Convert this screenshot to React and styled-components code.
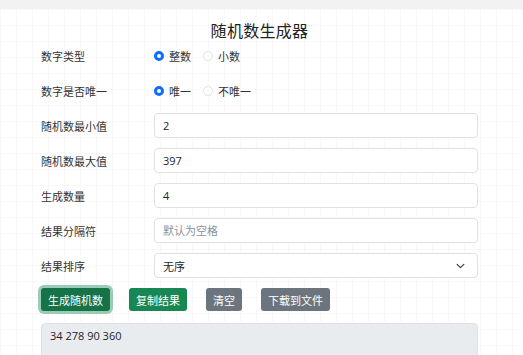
import React, { useState } from "react";
import styled, { createGlobalStyle } from "styled-components";

const GlobalStyle = createGlobalStyle`
  html, body {
    margin: 0;
    padding: 0;
    background: #fff;
  }
  body {
    font-family: "Open Sans", "Noto Sans CJK SC", sans-serif;
    color: #212529;
    overflow: hidden;
  }
`;

const Page = styled.div`
  height: 355px;
  overflow: hidden;
  border-top: 9px solid #f2f2f2;
  background-color: #fff;
  background-image:
    linear-gradient(rgba(0, 0, 0, 0.025) 1px, transparent 1px),
    linear-gradient(90deg, rgba(0, 0, 0, 0.025) 1px, transparent 1px);
  background-size: 16px 16px;
`;

const Container = styled.div`
  width: 437px;
  margin: 0 auto 0 41px;
`;

const Title = styled.h1`
  margin: 0;
  padding-top: 9px;
  height: 34px;
  box-sizing: border-box;
  text-align: center;
  font-size: 16px;
  font-weight: 400;
  color: #222;
  letter-spacing: 0.3px;
  font-family: "Noto Sans CJK SC", sans-serif;
`;

const Row = styled.div`
  display: grid;
  grid-template-columns: 113px 1fr;
  align-items: center;
  height: 25px;
  margin-bottom: 10px;
`;

const Label = styled.label`
  font-size: 11px;
  color: #333;
  font-family: "Noto Sans CJK SC", sans-serif;
`;

const Radios = styled.div`
  display: flex;
  align-items: center;
  gap: 12px;
`;

const RadioItem = styled.label`
  display: flex;
  align-items: center;
  gap: 5px;
  font-size: 11px;
  color: #333;
  font-family: "Noto Sans CJK SC", sans-serif;
`;

const RadioDot = styled.span`
  width: 10px;
  height: 10px;
  box-sizing: border-box;
  border-radius: 50%;
  border: ${(p) => (p.$on ? "3px solid #0d6efd" : "1px solid #dee2e6")};
  background: #fff;
`;

const Input = styled.input`
  box-sizing: border-box;
  width: 100%;
  height: 25px;
  padding: 0 8px;
  border: 1px solid #dee2e6;
  border-radius: 4px;
  background: #fff;
  font-size: 11px;
  color: #212529;
  font-family: "Open Sans", "Noto Sans CJK SC", sans-serif;
  outline: none;
  &::placeholder {
    color: #8c9196;
  }
`;

const SelectBox = styled.div`
  box-sizing: border-box;
  height: 25px;
  padding: 0 12px 0 8px;
  border: 1px solid #dee2e6;
  border-radius: 4px;
  background: #fff;
  display: flex;
  align-items: center;
  justify-content: space-between;
  font-size: 11px;
  color: #212529;
  font-family: "Noto Sans CJK SC", sans-serif;
`;

const Buttons = styled.div`
  display: flex;
  gap: 19px;
  margin-top: 2px;
  margin-bottom: 12px;
`;

const Button = styled.button`
  height: 23px;
  padding: 0 7px;
  border: none;
  border-radius: 3px;
  font-size: 11px;
  color: #fff;
  font-family: "Noto Sans CJK SC", sans-serif;
  background: ${(p) => (p.$variant === "gray" ? "#6c757d" : p.$focus ? "#157347" : "#198754")};
  box-shadow: ${(p) => (p.$focus ? "0 0 0 3px rgba(60, 153, 110, 0.5)" : "none")};
  cursor: pointer;
`;

const Result = styled.div`
  box-sizing: border-box;
  height: 60px;
  padding: 4px 8px;
  border: 1px solid #dee2e6;
  border-radius: 4px;
  background: #e9ecef;
  font-size: 11px;
  color: #212529;
  font-family: "Open Sans", sans-serif;
`;

function Radio({ on, children }) {
  return (
    <RadioItem>
      <RadioDot $on={on} />
      {children}
    </RadioItem>
  );
}

export default function App() {
  const [min, setMin] = useState("2");
  const [max, setMax] = useState("397");
  const [count, setCount] = useState("4");
  const [sep, setSep] = useState("");

  return (
    <Page>
      <GlobalStyle />
      <Container>
        <Title>随机数生成器</Title>
        <Row>
          <Label>数字类型</Label>
          <Radios>
            <Radio on>整数</Radio>
            <Radio>小数</Radio>
          </Radios>
        </Row>
        <Row>
          <Label>数字是否唯一</Label>
          <Radios>
            <Radio on>唯一</Radio>
            <Radio>不唯一</Radio>
          </Radios>
        </Row>
        <Row>
          <Label>随机数最小值</Label>
          <Input value={min} onChange={(e) => setMin(e.target.value)} />
        </Row>
        <Row>
          <Label>随机数最大值</Label>
          <Input value={max} onChange={(e) => setMax(e.target.value)} />
        </Row>
        <Row>
          <Label>生成数量</Label>
          <Input value={count} onChange={(e) => setCount(e.target.value)} />
        </Row>
        <Row>
          <Label>结果分隔符</Label>
          <Input placeholder="默认为空格" value={sep} onChange={(e) => setSep(e.target.value)} />
        </Row>
        <Row>
          <Label>结果排序</Label>
          <SelectBox>
            <span>无序</span>
            <svg width="9" height="6" viewBox="0 0 16 10">
              <path d="M2 2l6 6 6-6" fill="none" stroke="#343a40" strokeWidth="2" strokeLinecap="round" strokeLinejoin="round" />
            </svg>
          </SelectBox>
        </Row>
        <Buttons>
          <Button $focus>生成随机数</Button>
          <Button>复制结果</Button>
          <Button $variant="gray">清空</Button>
          <Button $variant="gray">下载到文件</Button>
        </Buttons>
        <Result>34 278 90 360</Result>
      </Container>
    </Page>
  );
}
